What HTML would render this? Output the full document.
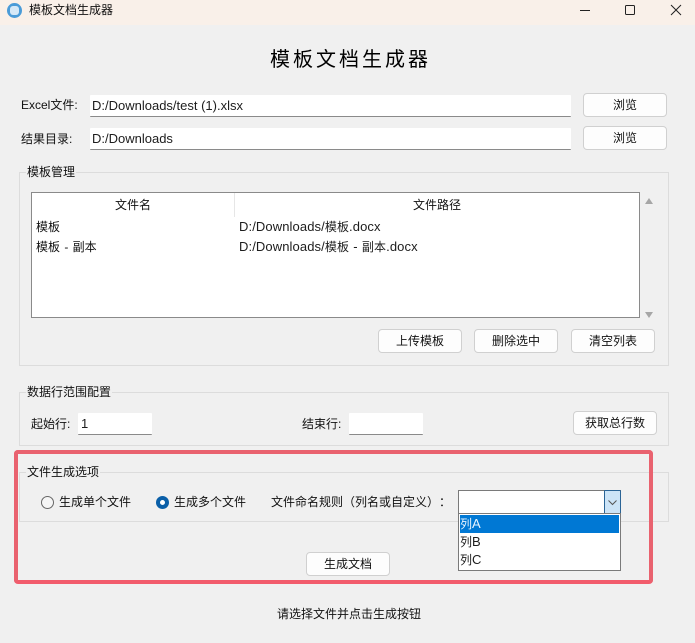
<!DOCTYPE html>
<html lang="zh-CN"><head><meta charset="utf-8"><title>模板文档生成器</title>
<style>
html,body{margin:0;padding:0}
body{width:695px;height:643px;overflow:hidden;background:#f0f0f0;position:relative;font-family:"Liberation Sans","Noto Sans CJK SC",sans-serif;font-size:12px;color:#111;text-spacing-trim:space-all}
div{position:absolute;box-sizing:border-box}
.t{white-space:nowrap;line-height:16px;height:16px}
.l{font-size:13px;color:#1c1c1c}
.c{font-size:12px}
.inp{background:#fff;border-bottom:1px solid #8a8a8a;border-radius:1px}
.btn{background:#fdfdfd;border:1px solid #d0d0d0;border-radius:4px;text-align:center;line-height:22px;width:84px;height:24px}
.grp{border:1px solid #dcdcdc}
.gt{background:#f0f0f0;padding:0 1px;left:26px}
</style></head><body>
<div style="left:0;top:0;width:695px;height:25px;background:#f9f0e9"></div>
<div style="left:7px;top:3px;width:15px;height:15px;border-radius:50%;background:#4a9bd8"></div>
<div style="left:10px;top:6px;width:9px;height:9px;border-radius:3px;background:#d5e8f7"></div>
<div class="t" style="left:29px;top:2px">模板文档生成器</div>
<svg style="position:absolute;left:570px;top:0" width="125" height="22" fill="none" stroke="#222" stroke-width="1"><path d="M10 10.5H20"/><rect x="55.5" y="5.5" width="9" height="9" rx="1"/><path d="M101 5L111 15M111 5L101 15"/></svg>
<div class="t" style="left:270px;top:47px;height:26px;line-height:26px;font-size:20px;letter-spacing:3px;color:#000">模板文档生成器</div>

<div class="t" style="left:21px;top:97px">Excel文件:</div>
<div class="inp" style="left:90px;top:95px;width:481px;height:22px"></div>
<div class="t l" style="left:92px;top:98px">D:/Downloads/test (1).xlsx</div>
<div class="btn" style="left:583px;top:93px">浏览</div>
<div class="t" style="left:21px;top:131px">结果目录:</div>
<div class="inp" style="left:90px;top:128px;width:481px;height:22px"></div>
<div class="t l" style="left:92px;top:131px">D:/Downloads</div>
<div class="btn" style="left:583px;top:126px">浏览</div>

<div class="grp" style="left:19px;top:172px;width:650px;height:194px"></div>
<div class="t gt" style="top:164px">模板管理</div>
<div style="left:31px;top:192px;width:609px;height:126px;background:#fff;border:1px solid #8a8a8a"></div>
<div style="left:234px;top:193px;width:1px;height:24px;background:#e6e6e6"></div>
<div class="t" style="left:115px;top:197px">文件名</div>
<div class="t" style="left:413px;top:197px">文件路径</div>
<div class="t" style="left:36px;top:219px">模板</div>
<div class="t l" style="left:239px;top:219px;letter-spacing:.1px">D:/Downloads/<span class="c">模板</span>.docx</div>
<div class="t" style="left:36px;top:239px;word-spacing:1px">模板 - 副本</div>
<div class="t l" style="left:239px;top:239px;word-spacing:.5px;letter-spacing:.1px">D:/Downloads/<span class="c">模板</span> - <span class="c">副本</span>.docx</div>
<svg style="position:absolute;left:643px;top:196px" width="12" height="124" fill="#a6a6a6"><path d="M2 8L6 2L10 8Z"/><path d="M2 116H10L6 122Z"/></svg>
<div class="btn" style="left:378px;top:329px">上传模板</div>
<div class="btn" style="left:474px;top:329px">删除选中</div>
<div class="btn" style="left:571px;top:329px">清空列表</div>

<div class="grp" style="left:19px;top:392px;width:650px;height:54px"></div>
<div class="t gt" style="top:384px">数据行范围配置</div>
<div class="t" style="left:31px;top:416px">起始行:</div>
<div class="inp" style="left:78px;top:413px;width:74px;height:22px"></div>
<div class="t l" style="left:81px;top:416px">1</div>
<div class="t" style="left:302px;top:416px">结束行:</div>
<div class="inp" style="left:349px;top:413px;width:74px;height:22px"></div>
<div class="btn" style="left:573px;top:411px">获取总行数</div>

<div class="grp" style="left:19px;top:472px;width:650px;height:50px"></div>
<div style="left:14px;top:450px;width:639px;height:134px;border:4px solid #e9626f;border-bottom-color:#f25c6c;border-radius:4px"></div>
<div class="t gt" style="top:464px">文件生成选项</div>
<div style="left:41px;top:496px;width:13px;height:13px;border-radius:50%;border:1px solid #666;background:#f5f5f5"></div>
<div class="t" style="left:59px;top:494px">生成单个文件</div>
<div style="left:156px;top:496px;width:13px;height:13px;border-radius:50%;border:4px solid #0a5fa8;background:#fff"></div>
<div class="t" style="left:174px;top:494px">生成多个文件</div>
<div class="t" style="left:271px;top:494px">文件命名规则（列名或自定义）：</div>
<div style="left:458px;top:490px;width:163px;height:24px;background:#fff;border:1px solid #7a7a7a"></div>
<div style="left:604px;top:490px;width:17px;height:24px;background:#cce4f7;border:1px solid #2a6496;border-radius:1px"></div>
<svg style="position:absolute;left:604px;top:490px" width="17" height="24" fill="none" stroke="#555" stroke-width="1"><path d="M4.5 10.5L8.5 14.5L12.5 10.5"/></svg>
<div style="left:458px;top:513px;width:163px;height:58px;background:#fff;border:1px solid #7a7a7a"></div>
<div style="left:460px;top:515px;width:159px;height:18px;background:#0078d4"></div>
<div class="t l" style="left:460px;top:516px;color:#e8f4ff"><span class="c">列</span>A</div>
<div class="t l" style="left:460px;top:534px"><span class="c">列</span>B</div>
<div class="t l" style="left:460px;top:552px"><span class="c">列</span>C</div>
<div class="btn" style="left:306px;top:552px">生成文档</div>
<div class="t" style="left:277px;top:606px">请选择文件并点击生成按钮</div>
</body></html>
